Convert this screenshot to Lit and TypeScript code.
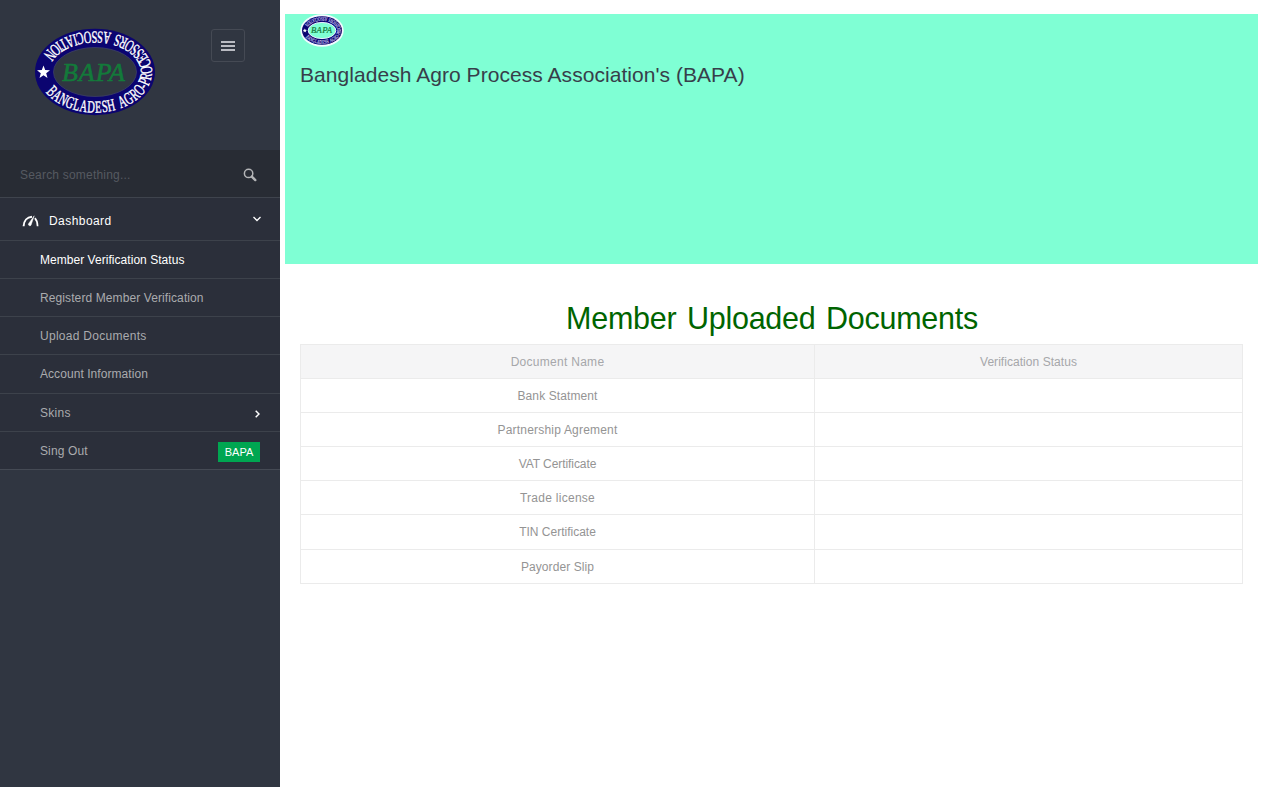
import { LitElement, html, svg, css } from "lit";
import { customElement, property } from "lit/decorators.js";

const RING_TEXT = "BANGLADESH AGRO-PROCESSORS ASSOCIATION";

// Advance widths of the serif capitals, in em.
const ADVANCE: Record<string, number> = {
  A: 0.722, B: 0.667, C: 0.667, D: 0.722, E: 0.611, G: 0.722, H: 0.722, I: 0.333,
  L: 0.611, N: 0.722, O: 0.722, P: 0.556, R: 0.667, S: 0.556, T: 0.611, "-": 0.333, " ": 0.36,
};

// Places condensed capitals counterclockwise along the ellipse, tops inward.
function ringGlyphs(a: number, b: number, from: number, to: number) {
  const steps = 900;
  const points: { t: number; s: number }[] = [{ t: from, s: 0 }];
  const dt = (to - from) / steps;
  for (let i = 1; i <= steps; i++) {
    const t = from + dt * (i - 0.5);
    const ds = Math.hypot(a * Math.sin(t), b * Math.cos(t)) * Math.abs(dt);
    points.push({ t: from + dt * i, s: points[i - 1].s + ds });
  }
  const total = points[steps].s;
  const sum = [...RING_TEXT].reduce((n, c) => n + ADVANCE[c], 0);
  let used = 0;
  return [...RING_TEXT].map((ch) => {
    const mid = ((used + ADVANCE[ch] / 2) / sum) * total;
    used += ADVANCE[ch];
    const t = (points.find((p) => p.s >= mid) ?? points[steps]).t;
    return {
      ch,
      x: a * Math.cos(t),
      y: b * Math.sin(t),
      angle: (Math.atan2(-b * Math.cos(t), a * Math.sin(t)) * 180) / Math.PI,
    };
  });
}

const rad = (d: number) => (d * Math.PI) / 180;
const GLYPHS = ringGlyphs(57, 40.6, rad(151), rad(-155));

@customElement("bapa-logo")
export class BapaLogo extends LitElement {
  @property({ type: Boolean, reflect: true }) small = false;

  static styles = css`
    :host { display: block; width: 126px; height: 92px; }
    :host([small]) { width: 44px; height: 33px; }
    svg { display: block; width: 100%; height: 100%; }
    .ring { font: 17px "Liberation Serif", serif; fill: #fff; stroke: #fff; stroke-width: 0.4; }
    .name { font: italic 26px "Liberation Serif", serif; fill: #137a3a; stroke: #137a3a; stroke-width: 0.6; }
    :host([small]) .ring { fill: #d8d4f4; stroke: #d8d4f4; }
  `;

  render() {
    return html`<svg viewBox=${this.small ? "-66 -50 132 100" : "-63 -46 126 92"} preserveAspectRatio="none">
      ${this.small ? svg`<ellipse rx="65" ry="49" fill="#f2fbff"/>` : ""}
      <ellipse rx="60" ry="43.2" fill="#0b0470"/>
      <ellipse rx="41.5" ry="24.5" fill=${this.small ? "#7fffd4" : "#303641"} stroke=${this.small ? "#e8f4ff" : "#3c3f68"} stroke-width=${this.small ? 3 : 0.8}/>
      ${GLYPHS.map((g) => svg`<text class="ring" text-anchor="middle"
        transform="translate(${g.x} ${g.y}) rotate(${g.angle}) scale(0.62 1)">${g.ch}</text>`)}
      <path d="M-51.5-6.4l1.7 4.5 4.8.2-3.8 3 1.3 4.6-4-2.6-4 2.6 1.3-4.6-3.8-3 4.8-.2z" fill="#fff"/>
      <text class="name" x="-33" y="8.8" textLength="63" lengthAdjust="spacing">BAPA</text>
    </svg>`;
  }
}

@customElement("side-bar")
export class SideBar extends LitElement {
  static styles = css`
    :host { display: block; width: 280px; flex: none; background: #303641; color: #aaabae; }
    * { box-sizing: border-box; }
    .top { display: flex; justify-content: space-between; align-items: flex-start; height: 150px; padding: 26px 35px 0 32px; }
    .toggle { width: 34px; height: 33px; margin-top: 3px; border: 1px solid #454a54; border-radius: 3px; display: grid; place-items: center; }
    .search { height: 47px; background: #282c34; display: flex; align-items: center; justify-content: space-between; padding: 2px 23px 0 20px; color: #565a61; letter-spacing: 0.2px; }
    .search span { padding-top: 2px; }
    .menu { margin: 0; padding: 0; list-style: none; background: #2b2f3a; border-top: 1px solid #3f444d; border-bottom: 1px solid #454a54; }
    .row { display: flex; align-items: center; padding: 10px 20px 10px 40px; height: 38.14px; border-top: 1px solid #3d424b; }
    .row.root { height: 42px; border-top: 0; padding: 4px 18px 0 22px; color: #fff; letter-spacing: 0.44px; }
    .row.on { color: #fff; letter-spacing: 0.04px; }
    .registered { letter-spacing: 0.1px; }
    .upload { letter-spacing: 0.28px; }
    .account { letter-spacing: 0.06px; }
    .skin { letter-spacing: 0.3px; }
    .out { letter-spacing: 0.12px; }
    .label { flex: 1; padding-top: 2px; }
    .skin .label, .out .label { padding-top: 3px; }
    .root .label { padding-left: 10px; }
    .root .chev { margin-top: -4px; }
    .skins { margin-top: 4px; }
    .badge { background: #00a651; color: #fff; font-size: 11px; line-height: 20px; width: 42px; height: 20px; text-align: center; margin-top: 3px; letter-spacing: 0; }
    svg { display: block; flex: none; }
  `;

  render() {
    return html`
      <div class="top">
        <bapa-logo></bapa-logo>
        <div class="toggle">
          <svg width="14" height="10" viewBox="0 0 14 10"><path d="M0 1h14M0 5h14M0 9h14" stroke="#b9bbc2" stroke-width="2"/></svg>
        </div>
      </div>
      <div class="search">
        <span>Search something...</span>
        <svg width="14" height="14" viewBox="0 0 14 14" fill="none" stroke="#b4b5b7"><circle cx="5.6" cy="5.4" r="4.2" stroke-width="1.5"/><path d="M8.8 8.6l3.5 3.5" stroke-width="2.4" stroke-linecap="round"/></svg>
      </div>
      <ul class="menu">
        <li class="row root">
          <svg width="17" height="12" viewBox="0 0 17 12" fill="none" stroke="#fff">
            <path d="M1.6 11.2C1.8 5.8 5 2 10 1.7" stroke-width="2"/>
            <path d="M12.9 3.2c1.7 1.8 2.6 4.6 2.7 8" stroke-width="1.7"/>
            <path d="M12.2.8L9 10.2a1.5 1.5 0 0 1-2.6-1.3z" fill="#fff" stroke-width=".5"/>
          </svg>
          <span class="label">Dashboard</span>
          <svg class="chev" width="10" height="6" viewBox="0 0 10 6"><path d="M1.5 1L5 4.5 8.5 1" fill="none" stroke="#fff" stroke-width="1.3"/></svg>
        </li>
        <li class="row on"><span class="label">Member Verification Status</span></li>
        <li class="row registered"><span class="label">Registerd Member Verification</span></li>
        <li class="row upload"><span class="label">Upload Documents</span></li>
        <li class="row account"><span class="label">Account Information</span></li>
        <li class="row skin"><span class="label">Skins</span>
          <svg class="skins" width="5" height="8" viewBox="0 0 5 8"><path d="M.7.8L4 4 .7 7.2" fill="none" stroke="#fff" stroke-width="1.5"/></svg></li>
        <li class="row out"><span class="label">Sing Out</span><span class="badge">BAPA</span></li>
      </ul>`;
  }
}

@customElement("app-root")
export class AppRoot extends LitElement {
  static styles = css`
    :host { display: flex; height: 787px; overflow: hidden; background: #fff; font: 12px/17.14px "Liberation Sans", Arial, sans-serif; color: #949494; }
    * { box-sizing: border-box; }
    .main { flex: 1; padding: 14px 4px 0 5px; }
    .banner { height: 250px; background: #7fffd4; padding: 0 15px; }
    .banner h3 { margin: 16px 0 0; font-size: 21px; line-height: 23px; font-weight: 400; color: #373e4a; letter-spacing: 0.05px; }
    .docs { padding: 38px 15px 0; }
    .docs h1 { margin: 0 0 9px; padding-left: 1px; font-size: 30.5px; line-height: 33px; font-weight: 400; color: #006400; text-align: center; word-spacing: 2.5px; letter-spacing: -0.27px; }
    table { width: 943px; border-collapse: collapse; table-layout: fixed; text-align: center; }
    th, td { border: 1px solid #ebebeb; padding: 9px 8px 7px; height: 34px; line-height: 17px; font-weight: 400; }
    th { background: #f5f5f6; color: #a6a7aa; letter-spacing: 0.05px; }
    .name { width: 514px; letter-spacing: 0.28px; }
    tr:nth-child(1) td { letter-spacing: 0.1px; }
    tr:nth-child(2) td { letter-spacing: 0.2px; }
    tr:nth-child(3) td { letter-spacing: -0.07px; }
    tr:nth-child(4) td { letter-spacing: 0.27px; }
    tr:nth-child(5) td { height: 35px; padding: 9px 8px 8px; }
    tr:nth-child(6) td { letter-spacing: 0.08px; }
  `;

  private docs = ["Bank Statment", "Partnership Agrement", "VAT Certificate", "Trade license", "TIN Certificate", "Payorder Slip"];

  render() {
    return html`
      <side-bar></side-bar>
      <main class="main">
        <section class="banner">
          <bapa-logo small></bapa-logo>
          <h3>Bangladesh Agro Process Association's (BAPA)</h3>
        </section>
        <section class="docs">
          <h1>Member Uploaded Documents</h1>
          <table>
            <thead><tr><th class="name">Document Name</th><th>Verification Status</th></tr></thead>
            <tbody>${this.docs.map((d) => html`<tr><td>${d}</td><td></td></tr>`)}</tbody>
          </table>
        </section>
      </main>`;
  }
}
